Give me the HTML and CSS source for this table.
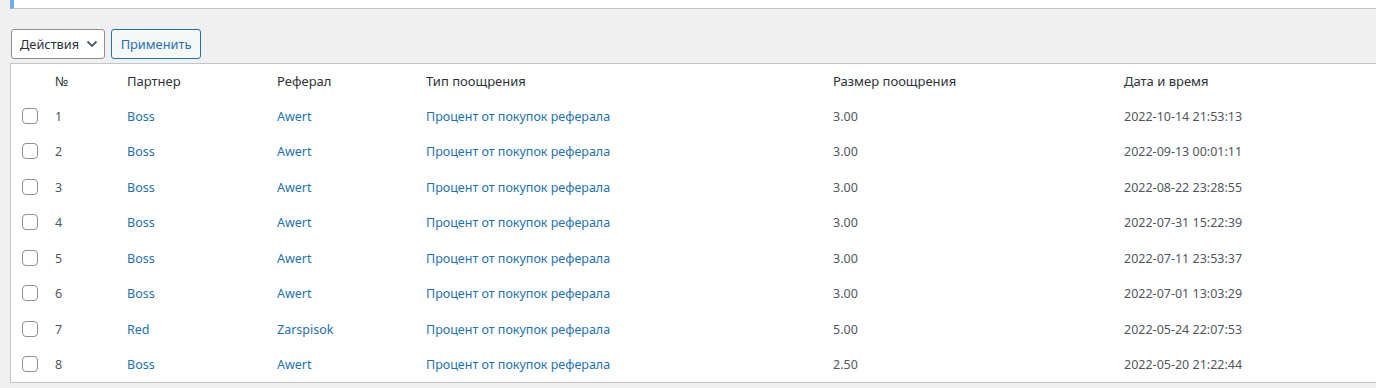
FILE: index.html
```html
<!DOCTYPE html>
<html lang="ru">
<head>
<meta charset="utf-8">
<link rel="stylesheet" href="styles.css">
</head>
<body>
<div class="notice"></div>
<div class="tablenav">
  <div class="select">Действия
    <svg class="chev" width="12" height="8" viewBox="0 0 12 8"><path d="M1.5 1.5 L6 6 L10.5 1.5" fill="none" stroke="#50575e" stroke-width="1.8"/></svg>
  </div>
  <div class="apply">Применить</div>
</div>
<div class="table-wrap">
<table class="list">
  <colgroup>
    <col class="c-cb"><col class="c-num"><col class="c-partner"><col class="c-ref"><col class="c-type"><col class="c-size"><col class="c-date">
  </colgroup>
  <thead>
    <tr><th></th><th>№</th><th>Партнер</th><th>Реферал</th><th>Тип поощрения</th><th>Размер поощрения</th><th>Дата и время</th></tr>
  </thead>
  <tbody>
    <tr><td class="cb"><span class="box"></span></td><td>1</td><td><a>Boss</a></td><td><a>Awert</a></td><td><a>Процент от покупок реферала</a></td><td>3.00</td><td>2022-10-14 21:53:13</td></tr>
    <tr><td class="cb"><span class="box"></span></td><td>2</td><td><a>Boss</a></td><td><a>Awert</a></td><td><a>Процент от покупок реферала</a></td><td>3.00</td><td>2022-09-13 00:01:11</td></tr>
    <tr><td class="cb"><span class="box"></span></td><td>3</td><td><a>Boss</a></td><td><a>Awert</a></td><td><a>Процент от покупок реферала</a></td><td>3.00</td><td>2022-08-22 23:28:55</td></tr>
    <tr><td class="cb"><span class="box"></span></td><td>4</td><td><a>Boss</a></td><td><a>Awert</a></td><td><a>Процент от покупок реферала</a></td><td>3.00</td><td>2022-07-31 15:22:39</td></tr>
    <tr><td class="cb"><span class="box"></span></td><td>5</td><td><a>Boss</a></td><td><a>Awert</a></td><td><a>Процент от покупок реферала</a></td><td>3.00</td><td>2022-07-11 23:53:37</td></tr>
    <tr><td class="cb"><span class="box"></span></td><td>6</td><td><a>Boss</a></td><td><a>Awert</a></td><td><a>Процент от покупок реферала</a></td><td>3.00</td><td>2022-07-01 13:03:29</td></tr>
    <tr><td class="cb"><span class="box"></span></td><td>7</td><td><a>Red</a></td><td><a>Zarspisok</a></td><td><a>Процент от покупок реферала</a></td><td>5.00</td><td>2022-05-24 22:07:53</td></tr>
    <tr><td class="cb"><span class="box"></span></td><td>8</td><td><a>Boss</a></td><td><a>Awert</a></td><td><a>Процент от покупок реферала</a></td><td>2.50</td><td>2022-05-20 21:22:44</td></tr>
  </tbody>
</table>
</div>
</body>
</html>
```
FILE: styles.css
```css
html { overflow: hidden; }
body {
  margin: 0;
  background: #f0f0f1;
  font-family: "Noto Sans", "Open Sans", sans-serif;
  font-size: 12.5px;
  color: #50575e;
  width: 1376px;
  height: 388px;
  overflow: hidden;
}
.notice {
  margin-left: 10px;
  height: 8px;
  background: #fff;
  border-left: 4px solid #72aee6;
  border-bottom: 1px solid #c3c4c7;
}
.tablenav {
  display: flex;
  gap: 6px;
  padding: 20px 0 5px 11px;
  height: 29px;
}
.select {
  box-sizing: border-box;
  width: 94px;
  height: 30px;
  border: 1px solid #8c8f94;
  border-radius: 3px;
  background: #fff;
  color: #2c3338;
  display: flex;
  align-items: center;
  padding: 0 0 0 8px;
  gap: 7px;
  font-size: 12.8px;
}
.apply {
  box-sizing: border-box;
  height: 30px;
  width: 90px;
  border: 1px solid #2271b1;
  border-radius: 3px;
  background: #f6f7f7;
  color: #2271b1;
  display: flex;
  align-items: center;
  justify-content: center;
  font-size: 12.8px;
}
.table-wrap {
  margin-left: 10px;
  margin-right: -4px;
  background: #fff;
  border: 1px solid #c3c4c7;
}
.list {
  border-collapse: collapse;
  width: 100%;
  table-layout: fixed;
}
.c-cb { width: 34px; }
.c-num { width: 72px; }
.c-partner { width: 150px; }
.c-ref { width: 149px; }
.c-type { width: 407px; }
.c-size { width: 291px; }
th {
  text-align: left;
  font-weight: 400;
  font-size: 13px;
  color: #2c3338;
  padding: 8px 10px 7px;
  line-height: 19px;
  height: 19px;
}
td {
  padding: 8.5px 10px 7.5px;
  line-height: 19.5px;
  vertical-align: middle;
}
td.cb { padding: 8px 0 8px 11px; }
.box {
  display: block;
  width: 16px;
  height: 16px;
  box-sizing: border-box;
  border: 1px solid #8c8f94;
  border-radius: 4px;
  background: #fff;
}
a { color: #2271b1; text-decoration: none; }
```
